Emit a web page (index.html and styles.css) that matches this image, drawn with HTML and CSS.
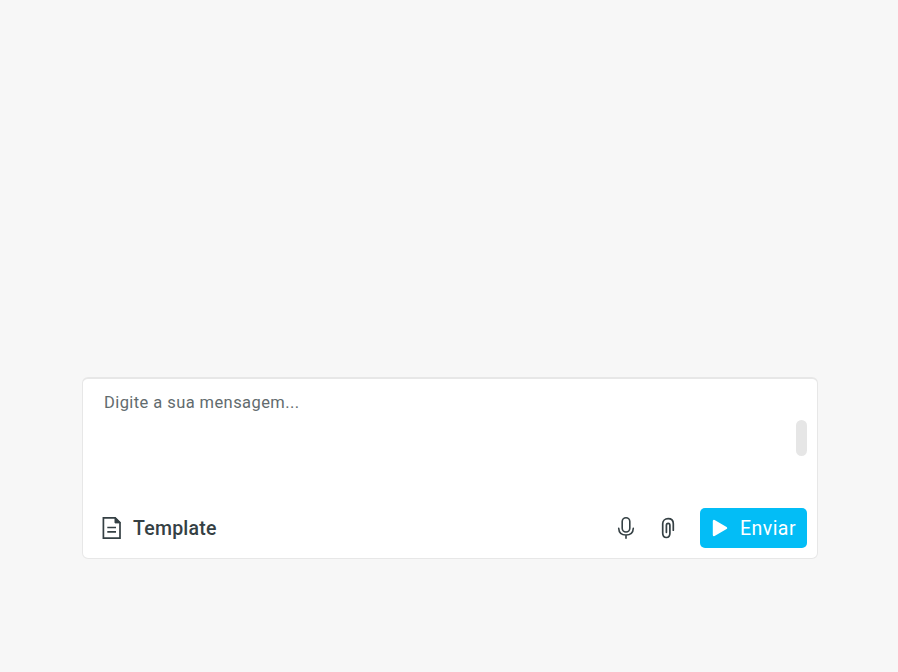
FILE: index.html
```html
<!DOCTYPE html>
<html lang="pt-BR">
<head>
<meta charset="utf-8">
<title>Mensagem</title>
<link rel="stylesheet" href="styles.css">
</head>
<body>
<main class="composer">
  <div class="message">
    <span class="placeholder">Digite a sua mensagem...</span>
    <span class="thumb"></span>
  </div>
  <div class="toolbar">
    <button class="template">
      <svg width="20" height="24" viewBox="0 0 20 24" fill="none" stroke="#354044" stroke-width="1.7"><path d="M1.4 1.9H13.2L18 6.7V22.2H1.4Z"/><path d="M13 1.7L18.2 6.9H13Z" fill="#354044" stroke-width="1"/><path d="M5.3 11.5H14M5.3 15.9H14"/></svg>
      <span class="label">Template</span>
    </button>
    <div class="actions">
      <svg class="mic" width="20" height="24" viewBox="0 0 20 24" fill="none" stroke="#354044" stroke-width="1.6" stroke-linecap="round"><rect x="6.2" y="1.8" width="7.6" height="14.2" rx="3.8"/><path d="M2.7 12.2C2.9 16.6 5.9 19 10 19S17.1 16.6 17.3 12.2M10 19V22.3"/></svg>
      <svg class="clip" width="16" height="24" viewBox="0 0 16 24" fill="none" stroke="#354044" stroke-width="1.7" stroke-linecap="round"><path d="M13.3 14.2V7.8C13.3 4.6 11.2 2.7 8.1 2.7S2.7 4.7 2.7 7.8V17C2.7 19.8 4.3 21.5 6.4 21.5S9.9 19.9 9.9 17.3V9.5C9.9 8.1 9.3 7.4 8.2 7.4S6.4 8.1 6.4 9.5V16.3"/></svg>
      <button class="send">
        <svg width="16" height="20" viewBox="0 0 16 20" fill="#fff" stroke="#fff" stroke-width="2.4" stroke-linejoin="round"><path d="M2 3V17L14 10Z"/></svg>
        <span class="label">Enviar</span>
      </button>
    </div>
  </div>
</main>
</body>
</html>
```
FILE: styles.css
```css
* { box-sizing: border-box; }
body {
  margin: 0;
  min-height: 672px;
  padding: 377px 80px 0 82px;
  background: #f7f7f7;
  color: #354044;
  font-family: Roboto, sans-serif;
}
.composer {
  height: 182px;
  display: flex;
  flex-direction: column;
  justify-content: space-between;
  padding: 0 10px 10px 19px;
  background: #fff;
  border: 1px solid #e7e7e7;
  border-top-width: 2px;
  border-radius: 6px;
}
.message {
  display: flex;
  justify-content: space-between;
  padding-top: 14px;
}
.placeholder {
  padding-left: 2px;
  font-size: 16.5px;
  font-weight: 400;
  line-height: 20px;
  letter-spacing: .42px;
  color: #626b6e;
}
.thumb {
  width: 11px;
  height: 36px;
  margin-top: 27px;
  border-radius: 6px;
  background: #e6e6e6;
}
.toolbar, .template, .actions, .send { display: flex; align-items: center; }
.toolbar { justify-content: space-between; height: 40px; }
button {
  border: 0;
  font: 500 19.5px/24px Roboto, sans-serif;
}
svg { display: block; flex: none; }
.label { padding-top: 2px; }
.template {
  gap: 11px;
  padding: 0;
  background: none;
  color: #354044;
  letter-spacing: .25px;
}
.mic { margin-right: 24px; }
.clip { margin-right: 24px; }
.send {
  width: 107px;
  height: 40px;
  padding: 0 0 0 12px;
  gap: 12px;
  border-radius: 5px;
  background: #03bdf6;
  color: #fff;
  font-weight: 450;
  letter-spacing: .45px;
}
```
